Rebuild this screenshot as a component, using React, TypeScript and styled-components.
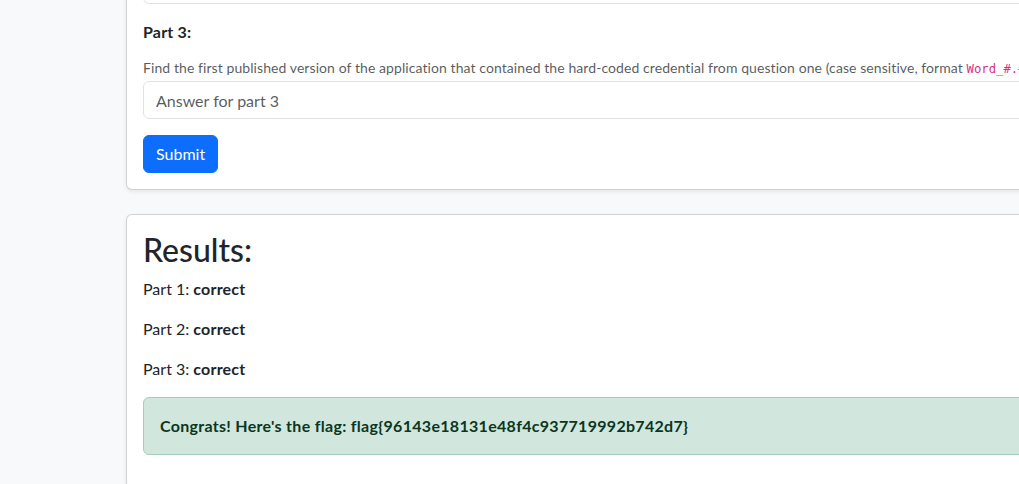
import React from "react";
import styled, { createGlobalStyle } from "styled-components";

const Global = createGlobalStyle`
  html, body { margin: 0; padding: 0; }
  body {
    background: #f8f9fa;
    color: #212529;
    font-family: Lato, "Noto Sans", sans-serif;
    font-size: 16px;
    line-height: 1.5;
    overflow: hidden;
  }
  * { box-sizing: border-box; }
  strong { letter-spacing: 0.2px; }
`;

const Main = styled.main`
  margin: -112px 0 0 126px;
  width: 1120px;
  display: flex;
  flex-direction: column;
  gap: 24px;
`;

const Card = styled.section`
  background: #fff;
  border: 1px solid rgba(0, 0, 0, 0.175);
  border-radius: 6px;
  box-shadow: 0 2px 4px rgba(0, 0, 0, 0.075);
  padding: 16px;
`;

const Field = styled.div`
  display: flex;
  flex-direction: column;
  align-items: stretch;
  margin-bottom: 16px;
`;

const Label = styled.label`
  display: block;
  font-weight: 700;
  line-height: 18px;
  margin: 3px 0 16px;
  letter-spacing: 0.2px;
`;

const Help = styled.div`
  font-size: 14px;
  line-height: 21px;
  height: 21px;
  margin: 0 0 3px;
  letter-spacing: 0.08px;
  color: rgba(33, 37, 41, 0.75);
  white-space: nowrap;
`;

const Code = styled.code`
  font-family: "DejaVu Sans Mono", "Liberation Mono", monospace;
  font-size: 12.25px;
  line-height: 1;
  letter-spacing: 0;
  color: #d63384;
`;

const Input = styled.input`
  display: block;
  width: 100%;
  height: 38px;
  padding: 6px 12px;
  font: inherit;
  font-size: 16px;
  color: #212529;
  background: #fff;
  border: 1px solid #dee2e6;
  border-radius: 6px;
  &::placeholder { color: rgba(33, 37, 41, 0.75); }
`;

const Button = styled.button`
  font: inherit;
  font-size: 16px;
  line-height: 24px;
  padding: 6px 12px;
  color: #fff;
  background: #0d6efd;
  border: 1px solid #0d6efd;
  border-radius: 6px;
`;

const Title = styled.h2`
  font-size: 32px;
  font-weight: 500;
  line-height: 1.2;
  margin: 0 0 8px;
`;

const Line = styled.p`
  margin: 0 0 16px;
`;

const Alert = styled.div`
  padding: 16px;
  margin-bottom: 16px;
  background: #d1e7dd;
  border: 1px solid #a3cfbb;
  border-radius: 6px;
  color: #0a3622;
  font-weight: 700;
  letter-spacing: 0.3px;
`;

export default function App() {
  return (
    <>
      <Global />
      <Main>
        <Card>
          <Field>
            <Label>Part 2:</Label>
            <Help>Answer the second question</Help>
            <Input placeholder="Answer for part 2" />
          </Field>
          <Field>
            <Label>Part 3:</Label>
            <Help>
              Find the first published version of the application that contained the hard-coded credential from question one (case sensitive, format <Code>Word_#.#</Code>)
            </Help>
            <Input placeholder="Answer for part 3" />
          </Field>
          <Button>Submit</Button>
        </Card>
        <Card>
          <Title>Results:</Title>
          <Line>Part 1: <strong>correct</strong></Line>
          <Line>Part 2: <strong>correct</strong></Line>
          <Line>Part 3: <strong>correct</strong></Line>
          <Alert>Congrats! Here's the flag: flag{"{"}96143e18131e48f4c937719992b742d7{"}"}</Alert>
        </Card>
      </Main>
    </>
  );
}
